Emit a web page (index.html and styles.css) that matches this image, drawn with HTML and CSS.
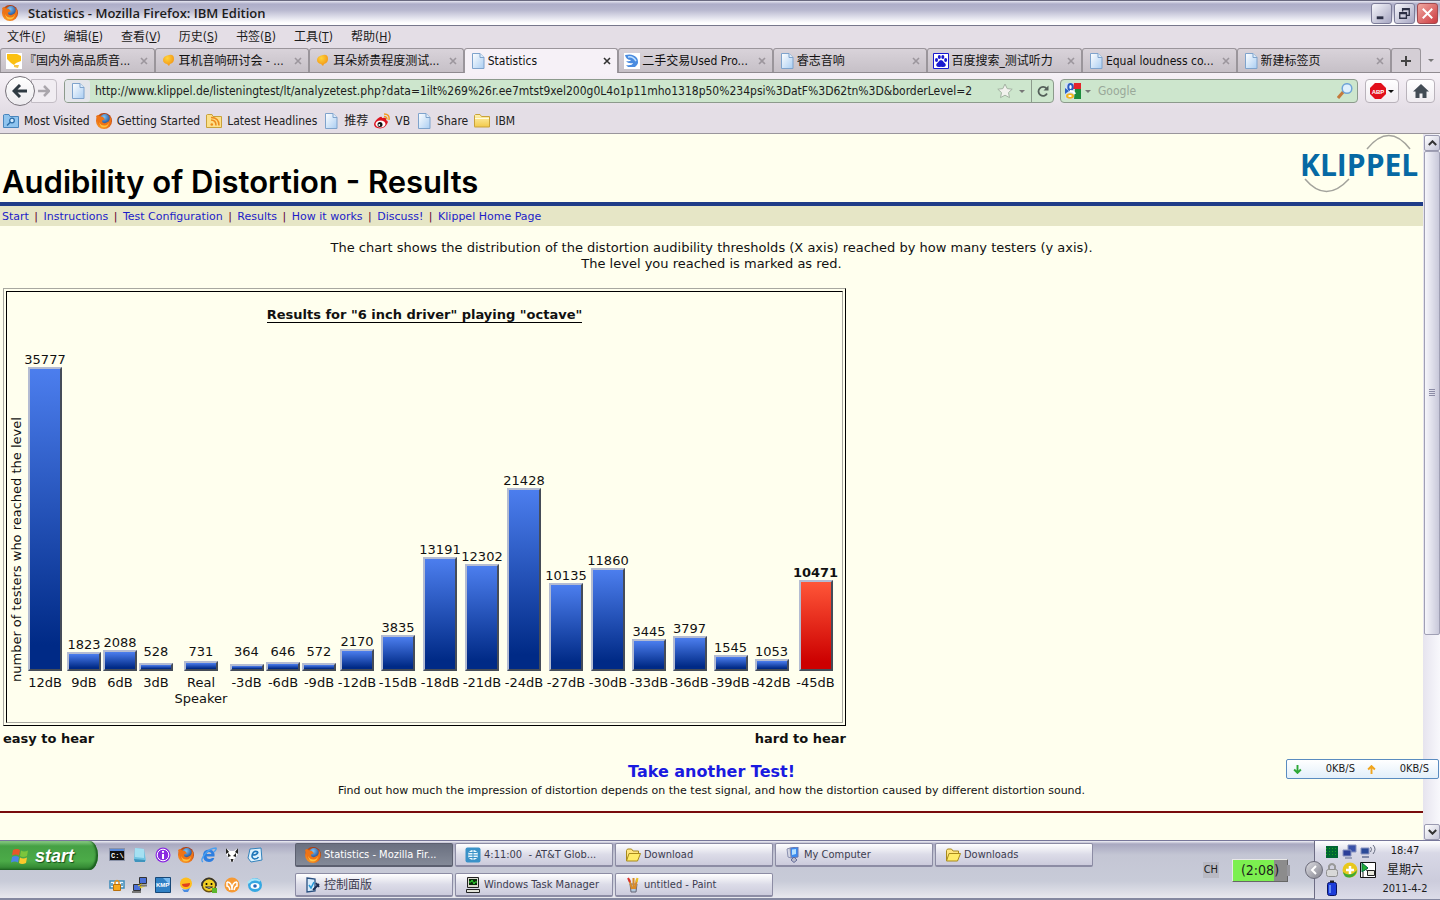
FILE: index.html
```html
<!DOCTYPE html>
<html lang="zh-CN">
<head>
<meta charset="utf-8">
<title>Statistics - Mozilla Firefox: IBM Edition</title>
<link rel="stylesheet" href="styles.css">
</head>
<body>
<svg class="sprites" aria-hidden="true">
  <defs>
    <linearGradient id="g-page" x1="0" y1="0" x2="1" y2="1"><stop offset="0" stop-color="#fff"/><stop offset="1" stop-color="#a9cdf2"/></linearGradient>
    <linearGradient id="g-folder" x1="0" y1="0" x2="0" y2="1"><stop offset="0" stop-color="#fff3b0"/><stop offset="1" stop-color="#f2c94a"/></linearGradient>
    <radialGradient id="g-fox" cx=".4" cy=".7" r=".7"><stop offset="0" stop-color="#ffb733"/><stop offset=".6" stop-color="#ee7416"/><stop offset="1" stop-color="#a8340c"/></radialGradient>
    <radialGradient id="g-ball" cx=".4" cy=".3" r=".8"><stop offset="0" stop-color="#ffd43a"/><stop offset="1" stop-color="#f08a10"/></radialGradient>
    <radialGradient id="g-globe" cx=".4" cy=".3" r=".8"><stop offset="0" stop-color="#7fc4f5"/><stop offset="1" stop-color="#123c86"/></radialGradient>
  </defs>
  <symbol id="i-fox" viewBox="0 0 16 16"><circle cx="8" cy="8" r="8" fill="url(#g-fox)"/><circle cx="9" cy="6" r="5" fill="url(#g-globe)"/><path d="M0 3l2-1 2 1.500 3 .5 2 2.500-2.500.5-.5 2q2 2 4.500.5l2-1q2-2 1-6 3 4 1 8-3 5-8 4-5-2-5-7z" fill="#ee7416"/><path d="M3 9q2 4 6 3.500 3-.5 4-3-1 5-5 5t-5-5.500z" fill="#ffc23c"/></symbol>
  <symbol id="i-page" viewBox="0 0 16 16"><path d="M2.500.5h7.500l4 4v11h-11.500z" fill="url(#g-page)" stroke="#7fa3cc"/><path d="M10 .5v4h4" fill="#dcecfb" stroke="#7fa3cc"/></symbol>
  <symbol id="i-folder" viewBox="0 0 16 16"><path d="M.5 13.500v-11l1-1h4.500l1.500 2h8v10.500h-15z" fill="url(#g-folder)" stroke="#c9a23a"/><path d="M1 5.500h14" stroke="#fffbe0"/></symbol>
  <symbol id="i-openfolder" viewBox="0 0 16 16"><path d="M1.500 13.500v-10l1-1.500h4l1.500 2h5.500v3" fill="#ffe680" stroke="#a88a1c"/><path d="M4 6.500h11.500l-3 7.500h-11z" fill="#ffec6a" stroke="#a88a1c"/></symbol>
  <symbol id="i-x" viewBox="0 0 8 8"><path d="M1 1l6 6M7 1l-6 6" stroke="currentColor" stroke-width="1.600"/></symbol>
  <symbol id="i-caret" viewBox="0 0 6 3"><path d="M0 0h6l-3 3z" fill="currentColor"/></symbol>
  <symbol id="i-ball" viewBox="0 0 16 16"><path d="M8 2q5-1 5 4 0 4-4 5l-1 2-2-2q-4-1-4-4 0-4 6-5z" fill="url(#g-ball)"/></symbol>
</svg>

<header class="titlebar">
  <svg class="ico16"><use href="#i-fox"/></svg>
  <h1 class="window-title">Statistics - Mozilla Firefox: IBM Edition</h1>
  <button class="win-btn" aria-label="Minimize"><svg viewBox="0 0 20 20"><path d="M5 14.500h7" stroke="#2b2f45" stroke-width="3"/></svg></button>
  <button class="win-btn" aria-label="Restore"><svg viewBox="0 0 20 20"><path d="M8 8V5h7v7h-3M8 6h7" fill="none" stroke="#2b2f45" stroke-width="1.400"/><path d="M5 9h7v6H5zM5 10h7" fill="none" stroke="#2b2f45" stroke-width="1.400"/></svg></button>
  <button class="win-btn win-close" aria-label="Close"><svg viewBox="0 0 20 20"><path d="M5 5l10 10M15 5L5 15" stroke="#fff" stroke-width="2"/></svg></button>
</header>

<nav class="menubar">
  <button>文件(<u>F</u>)</button><button>编辑(<u>E</u>)</button><button>查看(<u>V</u>)</button><button>历史(<u>S</u>)</button><button>书签(<u>B</u>)</button><button>工具(<u>T</u>)</button><button>帮助(<u>H</u>)</button>
</nav>

<div class="tabs">
  <div class="tab"><svg class="ico16" viewBox="0 0 16 16"><path fill="#fff" d="M0 0h16v16H0z"/><path d="M1 1h10l4 2v5l-5 2-2 2-3-2-4-4z" fill="#fbc012"/><path d="M8 12h5l-1 3-4-1z" fill="#f6c648"/></svg><button class="tab-label">『国内外高品质音...</button><button class="tab-close" aria-label="Close tab"><svg><use href="#i-x"/></svg></button></div>
  <div class="tab"><svg class="ico16"><use href="#i-ball"/></svg><button class="tab-label">耳机音响研讨会 - ...</button><button class="tab-close" aria-label="Close tab"><svg><use href="#i-x"/></svg></button></div>
  <div class="tab"><svg class="ico16"><use href="#i-ball"/></svg><button class="tab-label">耳朵娇贵程度测试...</button><button class="tab-close" aria-label="Close tab"><svg><use href="#i-x"/></svg></button></div>
  <div class="tab tab-active"><svg class="ico16"><use href="#i-page"/></svg><button class="tab-label">Statistics</button><button class="tab-close" aria-label="Close tab"><svg><use href="#i-x"/></svg></button></div>
  <div class="tab"><svg class="ico16" viewBox="0 0 16 16"><path fill="#fff" d="M0 0h16v16H0z"/><path d="M1 2q8-2 12 3 3 5-2 9H4l-2-2q6 1 7-2-5 1-7-2 4 1 5-1-5 0-6-5z" fill="#4a8be0"/><path d="M4 4q5-1 8 4" stroke="#bfe0ff" stroke-width="1.500" fill="none"/></svg><button class="tab-label">二手交易Used Pro...</button><button class="tab-close" aria-label="Close tab"><svg><use href="#i-x"/></svg></button></div>
  <div class="tab"><svg class="ico16"><use href="#i-page"/></svg><button class="tab-label">睿志音响</button><button class="tab-close" aria-label="Close tab"><svg><use href="#i-x"/></svg></button></div>
  <div class="tab"><svg class="ico16" viewBox="0 0 16 16"><path fill="#fff" stroke="#1a1ad0" d="M.5.5h15v15H.5z"/><g fill="#1a1ad0"><ellipse cx="3.500" cy="7" rx="1.500" ry="2"/><ellipse cx="6.300" cy="4" rx="1.500" ry="2"/><ellipse cx="9.800" cy="4" rx="1.500" ry="2"/><ellipse cx="12.600" cy="7" rx="1.500" ry="2"/><path d="M8 7q2 0 3 2.500 2.500 1.500 1.500 3.500-1 1.500-4.500.8-3.500.7-4.500-.8-1-2 1.500-3.500Q6 7 8 7z"/></g></svg><button class="tab-label">百度搜索_测试听力</button><button class="tab-close" aria-label="Close tab"><svg><use href="#i-x"/></svg></button></div>
  <div class="tab"><svg class="ico16"><use href="#i-page"/></svg><button class="tab-label">Equal loudness co...</button><button class="tab-close" aria-label="Close tab"><svg><use href="#i-x"/></svg></button></div>
  <div class="tab"><svg class="ico16"><use href="#i-page"/></svg><button class="tab-label">新建标签页</button><button class="tab-close" aria-label="Close tab"><svg><use href="#i-x"/></svg></button></div>
  <button class="tab-new" aria-label="New tab"><svg viewBox="0 0 10 10"><path d="M5 0v10M0 5h10" stroke="#444" stroke-width="2"/></svg></button>
  <button class="tab-list" aria-label="List all tabs"><svg class="caret"><use href="#i-caret"/></svg></button>
</div>

<form class="navbar">
  <div class="history">
    <button type="button" class="back" aria-label="Back"><svg viewBox="0 0 16 14"><path d="M8 1L2 7l6 6M2 7h13" fill="none" stroke="#2f3a42" stroke-width="3"/></svg></button>
    <button type="button" class="forward" aria-label="Forward"><svg viewBox="0 0 12 12"><path d="M6 1l5 5-5 5M11 6H0" fill="none" stroke="#aaa6ac" stroke-width="2.500"/></svg></button>
  </div>
  <div class="urlbox">
    <span class="identity"><svg class="ico16"><use href="#i-page"/></svg></span>
    <input class="url" aria-label="Address" value="http://www.klippel.de/listeningtest/lt/analyzetest.php?data=1ilt%269%26r.ee7mtst9xel200g0L4o1p11mho1318p50%234psi%3DatF%3D62tn%3D&amp;borderLevel=2">
    <svg class="ico16" viewBox="0 0 16 16"><path d="M8 1l2.200 4.600 5 .6-3.700 3.400 1 5L8 12.200 3.500 14.600l1-5L.8 6.200l5-.6z" fill="#f2f2ee" stroke="#a3b3a2"/></svg>
    <button type="button" class="drop" aria-label="History list"><svg class="caret"><use href="#i-caret"/></svg></button>
    <button type="button" class="reload" aria-label="Reload"><svg viewBox="0 0 12 12"><path d="M10 8.500A4.500 4.500 0 1 1 9.500 3.500" fill="none" stroke="#54605a" stroke-width="1.800"/><path d="M11.500.5v5h-5z" fill="#54605a"/></svg></button>
  </div>
  <div class="searchbox">
    <svg class="ico16" viewBox="0 0 16 16"><rect width="16" height="16" rx="1" fill="#cfe0f4"/><path d="M9 0h7v6H8z" fill="#e5232b"/><path d="M10 6h6v10H9z" fill="#1d8c3c"/><path d="M0 5l4 3-4 3z" fill="#2a63c8"/><ellipse cx="5.500" cy="4" rx="3.200" ry="4" fill="#2a5cc0"/><ellipse cx="5.500" cy="4" rx="1.200" ry="2" fill="#fff"/><path d="M5 8q4 0 5 3" fill="none" stroke="#fff" stroke-width="2"/><ellipse cx="5" cy="13" rx="4" ry="2.800" fill="#f3b51c"/><ellipse cx="5" cy="13" rx="1.800" ry="1" fill="#fff"/></svg>
    <svg class="caret"><use href="#i-caret"/></svg>
    <input class="query" aria-label="Search" placeholder="Google">
    <svg class="ico16" viewBox="0 0 16 16"><path d="M1 15l6-7" stroke="#c47a3c" stroke-width="3"/><circle cx="10" cy="5.500" r="4.800" fill="#dff0fd" stroke="#6fa4d8" stroke-width="1.500"/></svg>
  </div>
  <button type="button" class="tool-btn tool-abp" aria-label="Adblock Plus"><svg class="ico16" viewBox="0 0 16 16"><path d="M5 0h6l5 5v6l-5 5H5l-5-5V5z" fill="#e2101c"/><text x="8" y="11" text-anchor="middle" class="abp">ABP</text></svg><svg class="caret caret-dark"><use href="#i-caret"/></svg></button>
  <button type="button" class="tool-btn" aria-label="Home"><svg class="ico16" viewBox="0 0 16 16"><path d="M8 1l8 7.500h-2.500V15h-4v-4.500h-3V15h-4V8.500H0z" fill="#434c55"/></svg></button>
</form>

<nav class="bookmarks">
  <a href="#"><svg class="ico16" viewBox="0 0 16 16"><path d="M.5 14V2l1-.5h4.500l1 2h8.500V14.500H.5z" fill="#8fc4ee" stroke="#4a86bd"/><circle cx="9" cy="7.500" r="2.300" fill="#d5ecff" stroke="#2d6ea8" stroke-width="1.300"/><path d="M7 9.500l-3 3" stroke="#2d6ea8" stroke-width="1.500"/></svg>Most Visited</a>
  <a href="#"><svg class="ico16"><use href="#i-fox"/></svg>Getting Started</a>
  <a href="#"><svg class="ico16" viewBox="0 0 16 16"><path d="M.5 14V2l1-.5h4.500l1 2h8.500V14.500H.5z" fill="#fce08a" stroke="#c9a23a"/><path d="M5 7q5 0 5 5.500M5 4.500q8 0 8 8" fill="none" stroke="#ec8a1c" stroke-width="1.500"/><circle cx="5.800" cy="11.500" r="1.300" fill="#ec8a1c"/></svg>Latest Headlines</a>
  <a href="#"><svg class="ico16"><use href="#i-page"/></svg>推荐</a>
  <a href="#"><svg class="ico16" viewBox="0 0 16 16"><path d="M6 4q2-1 2 1 5-1 4 2 3 1 1 4-2 4-7 4.500Q0 15 0 11 1 7 6 4z" fill="#dc1420"/><ellipse cx="6.500" cy="11" rx="5" ry="3.500" fill="#fff"/><circle cx="6" cy="11.500" r="2.500" fill="#111"/><circle cx="5.300" cy="12" r=".9" fill="#fff"/><path d="M10 1q6 0 5 6M10 3.500q3 0 3 3" fill="none" stroke="#f39a1e" stroke-width="1.400"/></svg>VB</a>
  <a href="#"><svg class="ico16"><use href="#i-page"/></svg>Share</a>
  <a href="#"><svg class="ico16"><use href="#i-folder"/></svg>IBM</a>
</nav>

<div class="viewport">
  <main class="page">
    <div class="masthead">
      <h2 class="masthead-title">Audibility of Distortion - Results</h2>
      <svg class="logo" viewBox="0 0 122 62" role="img" aria-label="Klippel"><path d="M66 15Q88-12 109 15M4 45Q25 70 48 45" fill="none" stroke="#a3a39c" stroke-width="1.500"/><text x="-1" y="42" class="logo-text">KLIPPEL</text></svg>
    </div>
    <nav class="crumbs">
      <a href="#">Start</a> | <a href="#">Instructions</a> | <a href="#">Test Configuration</a> | <a href="#">Results</a> | <a href="#">How it works</a> | <a href="#">Discuss!</a> | <a href="#">Klippel Home Page</a>
    </nav>
    <p class="intro">The chart shows the distribution of the distortion audibility thresholds (X axis) reached by how many testers (y axis).<br>The level you reached is marked as red.</p>

    <section class="results">
      <div class="frame">
        <div class="frame-cell">
          <h3 class="chart-title">Results for "6 inch driver" playing "octave"</h3>
          <div class="chart">
            <div class="axis">number of testers who reached the level</div>
            <ol class="bars">
              <li><span>35777</span><div class="slot"><i style="height:304px"></i></div><b>12dB</b></li>
              <li><span>1823</span><div class="slot"><i style="height:19px"></i></div><b>9dB</b></li>
              <li><span>2088</span><div class="slot"><i style="height:21px"></i></div><b>6dB</b></li>
              <li><span>528</span><div class="slot"><i style="height:8px"></i></div><b>3dB</b></li>
              <li><span>731</span><div class="slot"><i style="height:10px"></i></div><b>Real<br>Speaker</b></li>
              <li><span>364</span><div class="slot"><i style="height:7px"></i></div><b>-3dB</b></li>
              <li><span>646</span><div class="slot"><i style="height:9px"></i></div><b>-6dB</b></li>
              <li><span>572</span><div class="slot"><i style="height:8px"></i></div><b>-9dB</b></li>
              <li><span>2170</span><div class="slot"><i style="height:22px"></i></div><b>-12dB</b></li>
              <li><span>3835</span><div class="slot"><i style="height:36px"></i></div><b>-15dB</b></li>
              <li><span>13191</span><div class="slot"><i style="height:114px"></i></div><b>-18dB</b></li>
              <li><span>12302</span><div class="slot"><i style="height:107px"></i></div><b>-21dB</b></li>
              <li><span>21428</span><div class="slot"><i style="height:183px"></i></div><b>-24dB</b></li>
              <li><span>10135</span><div class="slot"><i style="height:88px"></i></div><b>-27dB</b></li>
              <li><span>11860</span><div class="slot"><i style="height:103px"></i></div><b>-30dB</b></li>
              <li><span>3445</span><div class="slot"><i style="height:32px"></i></div><b>-33dB</b></li>
              <li><span>3797</span><div class="slot"><i style="height:35px"></i></div><b>-36dB</b></li>
              <li><span>1545</span><div class="slot"><i style="height:16px"></i></div><b>-39dB</b></li>
              <li><span>1053</span><div class="slot"><i style="height:12px"></i></div><b>-42dB</b></li>
              <li class="mine"><span>10471</span><div class="slot"><i style="height:91px"></i></div><b>-45dB</b></li>
            </ol>
          </div>
        </div>
      </div>
      <div class="range"><span>easy to hear</span><span>hard to hear</span></div>
    </section>

    <p class="again"><a href="#">Take another Test!</a></p>
    <p class="hint">Find out how much the impression of distortion depends on the test signal, and how the distortion caused by different distortion sound.</p>
    <hr class="rule">
  </main>
  <div class="scrollbar">
    <button aria-label="Scroll up"><svg viewBox="0 0 9 6"><path d="M.8 5l3.700-3.700L8.200 5" fill="none" stroke="#333" stroke-width="2"/></svg></button>
    <div class="thumb"><span class="grip"></span></div>
    <div class="track"></div>
    <button aria-label="Scroll down"><svg viewBox="0 0 9 6"><path d="M.8 1l3.700 3.700L8.200 1" fill="none" stroke="#333" stroke-width="2"/></svg></button>
  </div>
  <div class="speed">
    <svg viewBox="0 0 8 8"><path d="M4 0v7M1 4l3 3 3-3" fill="none" stroke="#2da836" stroke-width="1.700"/></svg><span>0KB/S</span>
    <svg class="speed-up" viewBox="0 0 8 8"><path d="M4 8V1M1 4l3-3 3 3" fill="none" stroke="#f0a51e" stroke-width="1.700"/></svg><span>0KB/S</span>
  </div>
</div>

<footer class="taskbar">
  <button class="start"><svg viewBox="0 0 18 18"><path d="M2 3q4-2 7 0L8 8.500q-3-2-7 0z" fill="#e8562a"/><path d="M10 3.500q3 2 7 0L16 9q-4 2-7 0z" fill="#7cc53c"/><path d="M1 10q3-2 7 0l-1 5.500q-3-2-7 0z" fill="#4a86e8"/><path d="M9 10.500q3 2 7 0L15 16q-4 2-7 0z" fill="#fbc92c"/></svg>start</button>
  <div class="quick">
    <svg viewBox="0 0 16 16"><path fill="#111" stroke="#8a92a8" d="M.5 1.500h15v12H.5z"/><path fill="#5a8ad8" d="M1 2h14v2H1z"/><text x="2" y="11" class="cmd">C:\</text></svg>
    <svg viewBox="0 0 16 16"><path d="M3 1l9 1 2 12-11 1-1-3z" fill="#6fc3e2"/><path d="M3 1l9 1v9l-9-1z" fill="#a5e0f2"/><path d="M2 12l11 1v2H3z" fill="#3f94bd"/></svg>
    <svg viewBox="0 0 16 16"><circle cx="8" cy="8" r="7.500" fill="#8a2be0"/><circle cx="8" cy="8" r="5.800" fill="none" stroke="#fff"/><path d="M8 7v5M8 4v1.800" stroke="#fff" stroke-width="2"/></svg>
    <svg><use href="#i-fox"/></svg>
    <svg viewBox="0 0 16 16"><path d="M13.500 9.500H5.500q.5 2.500 3 2.500 1.500 0 2.500-1h2.300Q12 15 8 15q-6-.5-6-6.500T8.500 2.500Q14 3 13.500 9.500zM5.500 7h5Q10 5 8 5T5.500 7z" fill="#2d7ee0"/><path d="M2 15Q-1 13 4 7t11-6q1 1-2 4" fill="none" stroke="#4aa0f0" stroke-width="1.300"/></svg>
    <svg viewBox="0 0 16 16"><path d="M2 1l4 3h4l4-3v6l-3 4-2 4H7l-2-4-3-4z" fill="#fff"/><path d="M2 1l3 4-3 2zM14 1l-3 4 3 2zM4 6l3 3-3 1zM12 6L9 9l3 1zM6.500 12h3l-1 3h-1z" fill="#222"/></svg>
    <svg viewBox="0 0 16 16"><path d="M3 2l11-1 1 12-11 2-3-4z" fill="#dff1fc" stroke="#3282bc"/><path d="M11 5Q7 3 5.500 7t2 5q3 0 4-2M6 8q4 0 5-3" fill="none" stroke="#1d74b8" stroke-width="1.600"/></svg>
    <svg viewBox="0 0 16 16"><path d="M1 4h14v7H1zM3 6v3M13 6v3" fill="#eef6fc" stroke="#3c8ab8" stroke-width="1.500"/><path d="M6 8V5q2-3 4 0v3" fill="none" stroke="#e89018" stroke-width="1.500"/><path fill="#f5a81e" stroke="#b8700c" d="M4.500 7.500h7v6h-7z"/></svg>
    <svg viewBox="0 0 16 16"><path fill="#4a70d8" stroke="#333" d="M7.500.5h7v6h-7zM1.500 7.500h7v6h-7z"/><path d="M6 9l4-2-2 4 5-2" stroke="#f0d020" fill="none"/><path d="M9 8.500h6M0 15h9" stroke="#777" stroke-width="2"/></svg>
    <svg viewBox="0 0 16 16"><path fill="#2f80c4" stroke="#174878" d="M.5.5h15v15H.5z"/><path d="M8 1l7 7V1z" fill="#78baf0"/><text x="1" y="10" class="kmp">KMP</text></svg>
    <svg viewBox="0 0 16 16"><circle cx="8" cy="6.500" r="6" fill="#ffbe1e"/><path d="M4 7l8-1q0 4-4 4T4 7z" fill="#e2401c"/><path d="M4 12q4 2 8-1l-2 4H6z" fill="#4a8ce2"/></svg>
    <svg viewBox="0 0 16 16"><circle cx="8" cy="8" r="6.800" fill="#f2cf24" stroke="#6a5210" stroke-width="1.500"/><path d="M1 9V6q7-9 14 0v3" fill="none" stroke="#333" stroke-width="1.500"/><circle cx="5.500" cy="7" r="1"/><circle cx="10.500" cy="7" r="1"/><path d="M4.500 10q3.500 3 7 0z" fill="#fff" stroke="#333"/><path d="M11 11h5v5h-5z" fill="#5cb62c"/></svg>
    <svg viewBox="0 0 16 16"><circle cx="8" cy="8" r="7.500" fill="#f69a34"/><path d="M3 5q5 0 5 8 0-8 5-8M3 5v4q2 0 3 4M13 5v4q-2 0-3 4" fill="none" stroke="#fff" stroke-width="1.500"/></svg>
    <svg viewBox="0 0 16 16"><circle cx="8" cy="8" r="7" fill="#35a8e2"/><ellipse cx="8" cy="9" rx="4.500" ry="3" fill="#fff"/><circle cx="8" cy="9" r="1.800" fill="#2868b8"/><path d="M1 6q5-6 12-2" stroke="#a6e4f8" stroke-width="2" fill="none"/></svg>
  </div>
  <div class="tasks">
    <button class="task task-on"><svg class="ico16"><use href="#i-fox"/></svg>Statistics - Mozilla Fir...</button>
    <button class="task"><svg class="ico16" viewBox="0 0 16 16"><rect x=".5" y=".5" width="15" height="15" rx="2" fill="#3a92c8"/><circle cx="8" cy="8" r="5" fill="#eaf6fc"/><path d="M3 8h10M8 3v10M4 5.500h8M4 10.500h8" stroke="#3a92c8"/></svg>4:11:00&nbsp; - AT&amp;T Glob...</button>
    <button class="task"><svg class="ico16"><use href="#i-openfolder"/></svg>Download</button>
    <button class="task"><svg class="ico16" viewBox="0 0 16 16"><path d="M5 1l8-1v10l-7 1z" fill="#3a8af0" stroke="#6a78b0"/><path d="M7 2.500l4-.5v5l-4 1z" fill="#b4e0ff"/><path d="M2 2l3-1 1 10-3-1z" fill="#d5d7e4" stroke="#8a90b0"/><path d="M6 13l3-3 3 3-3 2.500z" fill="#b9bccb" stroke="#666c98"/></svg>My Computer</button>
    <button class="task"><svg class="ico16"><use href="#i-openfolder"/></svg>Downloads</button>
    <button class="task task-cjk"><svg class="ico16" viewBox="0 0 16 16"><path d="M2 1l8 1v12l-8 1z" fill="#d8ecfc" stroke="#2a5080" stroke-width="1.300"/><path d="M4 8l2 3 3-6" stroke="#2a9ad8" stroke-width="1.600" fill="none"/><path d="M8 13l6-6M11 6l3 4" stroke="#1c2c50" stroke-width="1.800"/></svg>控制面版</button>
    <button class="task"><svg class="ico16" viewBox="0 0 16 16"><path d="M2.500.5h11v10h-11z" fill="#d8d8cc" stroke="#222"/><path fill="#0a2a0a" d="M4 2h8v6H4z"/><path d="M4 5h2l1-2 2 4 1-2h2" stroke="#2fe02f" fill="none"/><path d="M1.500 12.500h13v3h-13z" fill="#e2e2d8" stroke="#222"/></svg>Windows Task Manager</button>
    <button class="task"><svg class="ico16" viewBox="0 0 16 16"><path d="M5 7h7l-1 8H6z" fill="#b4c8dc" stroke="#667"/><path d="M7 12L4 2M8.500 12V1M10 12l2-10" stroke-width="2" stroke="#d88a28"/><path d="M3 1l2 4" stroke="#d83030" stroke-width="2"/><path d="M12.500 1l-1 4" stroke="#e8c020" stroke-width="2"/></svg>untitled - Paint</button>
  </div>
  <div class="status">
    <span class="lang">CH</span>
    <span class="battery">(2:08)</span>
  </div>
  <div class="tray">
    <button class="tray-toggle" aria-label="Show hidden icons"><svg viewBox="0 0 8 10"><path d="M6 1L2 5l4 4" fill="none" stroke="#fff" stroke-width="2"/></svg></button>
    <div class="tray-icons">
      <svg viewBox="0 0 16 16"><path fill="#063" d="M2 2h12v12H2z"/><path d="M2 4.500h12M2 7.500h12M2 10.500h12" stroke="#1da51d" stroke-dasharray="1 2"/></svg>
      <svg viewBox="0 0 16 16"><path d="M6 1h8v7H6z" fill="#3a52a8" stroke="#8a94c0"/><path d="M1 6h8v6H1z" fill="#2b3e98" stroke="#8a94c0"/><path d="M3 14h7" stroke="#9aa0b8" stroke-width="2"/></svg>
      <svg viewBox="0 0 16 16"><path d="M1 4h8v6H1z" fill="#2b4a98" stroke="#8a94c0"/><path d="M2 13h7" stroke="#8088a8" stroke-width="2"/><path d="M10.500 3q2 2 0 5M13 1q4 4 0 9" fill="none" stroke="#666c80"/></svg>
      <svg viewBox="0 0 16 16"><path d="M5 8V4q3-4 6 0v4" fill="none" stroke="#999" stroke-width="2"/><rect x="2.500" y="7.500" width="11" height="7" rx="2" fill="#d8d8d8" stroke="#909090"/></svg>
      <svg viewBox="0 0 16 16"><circle cx="8" cy="8" r="7.500" fill="#e8c81c"/><path d="M1 10q7 6 14-2-1 7-7 7.500T1 10z" fill="#3faa34"/><path d="M8 4v8M4 8h8" stroke="#fff" stroke-width="2.500"/></svg>
      <svg viewBox="0 0 16 16"><path fill="#fff" stroke="#111" d="M.5.5h15v15H.5z"/><path d="M2 1v9l6-4z" fill="#22b032" stroke="#064"/><path d="M3 10v5M6 8l3 1" stroke="#222"/><path d="M7.500 8.500h7v5h-7z" fill="#e8e8dc" stroke="#222"/></svg>
      <svg viewBox="0 0 16 16"><rect x="3.500" y="2.500" width="9" height="13" rx="2" fill="#1c3cd8" stroke="#0a1460"/><path d="M6 1.500h4" stroke="#222" stroke-width="2"/><path d="M6 5v8" stroke="#7aa4ff" stroke-width="1.500"/></svg>
    </div>
    <div class="clock"><span>18:47</span><span class="clock-day">星期六</span><span>2011-4-2</span></div>
  </div>
</footer>
</body>
</html>
```

FILE: styles.css
```css
* { box-sizing: border-box; }
body {
  margin: 0;
  height: 100vh;
  display: flex;
  flex-direction: column;
  overflow: hidden;
  background: #e4dee6;
  color: #1c1c1c;
  font: 12px/16px "DejaVu Sans Condensed", "Noto Sans CJK SC", sans-serif;
}
button, input {
  font: inherit;
  color: inherit;
  background: none;
  border: 0;
  padding: 0;
  margin: 0;
  min-width: 0;
}
a { text-decoration: none; }
svg { display: block; flex: none; }
.sprites { position: absolute; width: 0; height: 0; }
.ico16 { width: 16px; height: 16px; }
.caret { width: 6px; height: 3px; color: #777; }
.caret-dark { color: #111; }

.titlebar {
  height: 26px;
  flex: none;
  display: flex;
  align-items: center;
  gap: 2px;
  padding: 0 2px;
  border-top: 1px solid #6a6a80;
  border-bottom: 1px solid #77778c;
  background: linear-gradient(#e8e8f2 0, #adadc8 3px, #b8b8cf 9px, #e4e4ee 17px, #fff 22px);
}
.window-title {
  flex: 1;
  margin: 0 8px;
  font: 600 13px/18px "Open Sans", sans-serif;
}
.win-btn {
  width: 21px;
  height: 21px;
  border: 1px solid #7c7c98;
  border-radius: 3px;
  background: linear-gradient(135deg, #f6f6fb, #a6a6c2);
}
.win-close { border-color: #a04a50; background: linear-gradient(135deg, #f0a8a0, #cc3a40); }

.menubar {
  height: 22px;
  flex: none;
  display: flex;
  align-items: center;
  gap: 18px;
  padding: 0 7px;
}

.tabs {
  height: 25px;
  flex: none;
  display: flex;
  border-bottom: 1px solid #8f8a90;
}
.tab {
  flex: 1 1 0;
  min-width: 0;
  display: flex;
  align-items: center;
  gap: 1px;
  padding: 0 6px 0 5px;
  border: 1px solid #9a959b;
  border-bottom: 0;
  border-radius: 3px 3px 0 0;
  background: linear-gradient(#d9d3da, #c6c0c7);
  color: #111;
}
.tab-active { background: #f6f1f7; margin-bottom: -1px; }
.tab-label { flex: 1; text-align: left; white-space: nowrap; overflow: hidden; }
.tab .ico16 { margin-right: 1px; }
.tab-close { width: 8px; height: 8px; color: #9c969d; }
.tab-close svg { width: 8px; height: 8px; }
.tab-active .tab-close { color: #333; }
.tab-new {
  width: 30px;
  border: 1px solid #9a959b;
  border-bottom: 0;
  border-radius: 3px 3px 0 0;
  background: #d4ced5;
}
.tab-new svg { width: 10px; margin: auto; }
.tab-list { width: 19px; }
.tab-list svg { margin: auto; }

.navbar {
  height: 36px;
  flex: none;
  display: flex;
  align-items: center;
  padding: 0 5px;
  background: linear-gradient(#f6f1f7, #e4dee6);
}
.history { display: flex; align-items: center; margin-right: 7px; }
.back {
  width: 30px;
  height: 30px;
  border: 1px solid #77727a;
  border-radius: 50%;
  background: linear-gradient(#fff, #eceaee);
  z-index: 1;
}
.back svg { width: 16px; margin: auto; }
.forward {
  width: 26px;
  height: 24px;
  margin-left: -4px;
  border: 1px solid #c3bdc5;
  border-radius: 0 4px 4px 0;
  background: #f1edf2;
}
.forward svg { width: 12px; margin: auto; }
.urlbox, .searchbox {
  height: 24px;
  display: flex;
  align-items: center;
  border: 1px solid #8c9a8c;
  border-radius: 4px;
  background: #cde6cd;
}
.urlbox { flex: 1; margin-right: 6px; }
.identity {
  width: 25px;
  height: 22px;
  display: flex;
  align-items: center;
  justify-content: center;
  border-radius: 3px;
  background: #e4e6ea;
}
.url { flex: 1; height: 22px; margin-left: 5px; }
.drop { width: 18px; height: 22px; }
.drop svg { margin: auto; }
.reload { width: 22px; height: 22px; border-left: 1px solid #8c9a8c; }
.reload svg { width: 12px; margin: auto; }
.searchbox { width: 298px; gap: 4px; padding: 0 4px; margin-right: 7px; }
.query { flex: 1; height: 22px; margin-left: 3px; }
.query::placeholder { color: #99a899; opacity: 1; }
.tool-btn {
  width: 29px;
  height: 24px;
  display: flex;
  align-items: center;
  justify-content: center;
  gap: 2px;
  border: 1px solid #b9b3bb;
  border-radius: 4px;
  background: linear-gradient(#fff, #f0ecf1);
}
.tool-abp { width: 34px; margin-right: 7px; }
.abp { font: bold 6px "Liberation Sans", sans-serif; fill: #fff; }

.bookmarks {
  height: 25px;
  flex: none;
  display: flex;
  align-items: center;
  gap: 6px;
  padding: 0 3px;
  border-bottom: 1px solid #9a969c;
}
.bookmarks a { display: flex; align-items: center; gap: 5px; color: #222; }

.viewport { position: relative; flex: 1; min-height: 0; display: flex; }
.page {
  flex: 1;
  min-width: 0;
  overflow: hidden;
  background: #ffffee;
  color: #111;
  font: 13px/16px "DejaVu Sans", sans-serif;
}
.masthead {
  height: 72px;
  display: flex;
  align-items: flex-start;
  justify-content: space-between;
  border-bottom: 4px solid #1f3c88;
}
.masthead-title {
  margin: 30px 0 0 2px;
  font: 600 31px/36px "Inter", "Liberation Sans", sans-serif;
  color: #000;
}
.logo { width: 122px; height: 62px; }
.logo-text { font: bold 30px "Open Sans", sans-serif; fill: #0669a4; }
.crumbs {
  height: 20px;
  padding: 3px 0;
  background: #e6e6c6;
  color: #600030;
  font-size: 11px;
}
.crumbs a { margin: 0 2px; color: #1c1cc8; }
.intro { margin: 14px 0 16px; text-align: center; }
.results { width: 843px; margin-left: 3px; }
.frame {
  padding: 2px;
  border: 1px solid;
  border-color: #a8a8a0 #000 #000 #a8a8a0;
}
.frame-cell {
  padding: 15px 3px 15px 3px;
  border: 1px solid;
  border-color: #000 #a8a8a0 #a8a8a0 #000;
}
.chart-title {
  width: max-content;
  margin: 0 auto 28px;
  border-bottom: 1px solid #000;
  font-size: 13px;
  line-height: 15px;
}
.chart { display: flex; }
.axis {
  width: 14px;
  height: 331px;
  writing-mode: vertical-rl;
  transform: rotate(180deg);
  line-height: 14px;
  white-space: nowrap;
}
.bars {
  display: grid;
  grid-template-columns: 42px 36px 36px 36px 54px 37px 36px 36px 40px 42px 42px 42px 42px 42px 42px 40px 41px 41px 41px 47px;
  height: 356px;
  margin: 0;
  padding: 0;
  list-style: none;
}
.bars li {
  display: flex;
  flex-direction: column;
  align-items: center;
  justify-content: flex-end;
  white-space: nowrap;
  text-align: center;
}
.bars span { line-height: 14px; }
.slot { min-height: 12px; display: flex; align-items: flex-end; }
.slot i {
  display: block;
  width: 34px;
  border: 2px solid;
  border-color: #b4bcd2 #454c58 #454c58 #b4bcd2;
  background: linear-gradient(#4c7eee, #002a86 92%);
}
.bars b { height: 36px; padding-top: 4px; font-weight: normal; }
.mine span { font-weight: bold; }
.mine .slot i { background: linear-gradient(#ff5638, #cc0000 92%); }
.range {
  display: flex;
  justify-content: space-between;
  padding-top: 5px;
  font-weight: bold;
}
.again { margin: 16px 0 3px; text-align: center; font: bold 16px/18px "DejaVu Sans", sans-serif; }
.again a { color: #1a1ae0; }
.hint { margin: 0; text-align: center; font-size: 11px; line-height: 14px; }
.rule { height: 2px; margin: 13px 0 0; border: 0; background: #780c0c; }

.scrollbar {
  width: 17px;
  display: flex;
  flex-direction: column;
  padding: 1px 0 0 1px;
  background: linear-gradient(90deg, #e6e4ee, #f8f8fc);
}
.scrollbar button {
  height: 16px;
  border: 1px solid #9a9ab0;
  border-radius: 2px;
  background: linear-gradient(135deg, #fff, #c6c6d8);
}
.scrollbar button svg { width: 9px; margin: auto; }
.thumb {
  flex: 483;
  display: flex;
  align-items: center;
  justify-content: center;
  border: 1px solid #a0a0b4;
  border-radius: 2px;
  background: linear-gradient(90deg, #f6f6fb, #c8c8da);
}
.grip { width: 6px; height: 8px; background: repeating-linear-gradient(#8c8ca6 0 1px, transparent 1px 2px); }
.track { flex: 189; }
.speed {
  position: absolute;
  right: 1px;
  bottom: 61px;
  width: 153px;
  height: 20px;
  display: flex;
  align-items: center;
  padding: 0 9px 0 6px;
  border: 1px solid #5a8cc0;
  border-radius: 2px;
  background: linear-gradient(#fff, #e2effa);
  font-size: 11px;
}
.speed svg { width: 9px; height: 9px; }
.speed span { flex: 1; text-align: right; }
.speed-up { margin-left: 12px; }

.taskbar {
  height: 60px;
  flex: none;
  display: flex;
  align-items: flex-start;
  border-top: 1px solid #77779a;
  border-bottom: 2px solid #8488a0;
  background: linear-gradient(#f0f0f6 0, #a8a8c0 3px, #c4c6d4 14px, #c8cbd8 40px, #e8e8ee);
}
.start {
  width: 98px;
  height: 29px;
  display: flex;
  align-items: center;
  gap: 6px;
  padding-left: 11px;
  border-radius: 0 9px 9px 0 / 0 15px 15px 0;
  background: linear-gradient(#8ccc86, #45a044 5px, #4cab48 20px, #2c7e2e);
  box-shadow: inset -2px -1px 2px #1c5e20;
  color: #fff;
  font: italic bold 18px/24px "Liberation Sans", sans-serif;
  text-shadow: 1px 1px 1px #14501a;
}
.start svg { width: 18px; height: 18px; }
.quick {
  width: 197px;
  display: grid;
  grid-template-columns: repeat(7, 16px);
  gap: 14px 7px;
  padding: 6px 0 0 11px;
}
.quick svg { width: 16px; height: 16px; }
.cmd { font: bold 7px "Liberation Mono", monospace; fill: #fff; }
.kmp { font: bold 6px "Liberation Sans", sans-serif; fill: #fff; }
.tasks {
  display: grid;
  grid-template-columns: repeat(5, 158px);
  gap: 6px 2px;
  padding-top: 2px;
}
.task {
  height: 24px;
  display: flex;
  align-items: center;
  gap: 3px;
  padding-left: 9px;
  border: 1px solid #8c8ca4;
  border-width: 1px 1px 2px;
  border-radius: 2px;
  background: linear-gradient(#fff, #dcdce8 50%, #cccbdc);
  color: #3c3c50;
  font-size: 11px;
  white-space: nowrap;
}
.task-on { background: linear-gradient(#6a7080, #848a98); color: #fff; border-color: #5c6070; }
.task-cjk { font-size: 12px; }
.status { flex: 1; display: flex; align-items: center; justify-content: flex-end; gap: 13px; height: 58px; padding-right: 26px; }
.lang { padding: 0 1px; background: #b9bac4; font-size: 11px; }
.battery {
  position: relative;
  width: 56px;
  height: 23px;
  border: 1px solid #707070;
  border-color: #e8e8e8 #666 #666 #e8e8e8;
  background: linear-gradient(90deg, #7cf050 76%, #8c8c8c 76%);
  font-size: 14px;
  line-height: 20px;
  text-align: center;
}
.battery::after {
  content: "";
  position: absolute;
  left: 100%;
  top: 5px;
  width: 3px;
  height: 11px;
  background: #96969c;
}
.tray {
  position: relative;
  width: 126px;
  height: 58px;
  display: flex;
  border-left: 1px solid #6c6c84;
  background: linear-gradient(#fff, #d8d8e6 12px, #ccccdc 40px, #dcdce8);
}
.tray-toggle {
  position: absolute;
  left: -10px;
  top: 20px;
  width: 18px;
  height: 18px;
  border: 1px solid #6a6a78;
  border-radius: 50%;
  background: linear-gradient(135deg, #dcdce2, #84848e);
}
.tray-toggle svg { width: 8px; margin: auto; }
.tray-icons {
  display: grid;
  grid-template-columns: repeat(3, 16px);
  grid-auto-rows: 16px;
  gap: 2px;
  padding: 3px 0 0 9px;
}
.tray-icons svg { width: 16px; height: 16px; }
.clock {
  flex: 1;
  display: flex;
  flex-direction: column;
  align-items: center;
  gap: 3px;
  padding: 2px 6px 0 0;
  font-size: 11px;
}
.clock-day { font-size: 12px; }
```
